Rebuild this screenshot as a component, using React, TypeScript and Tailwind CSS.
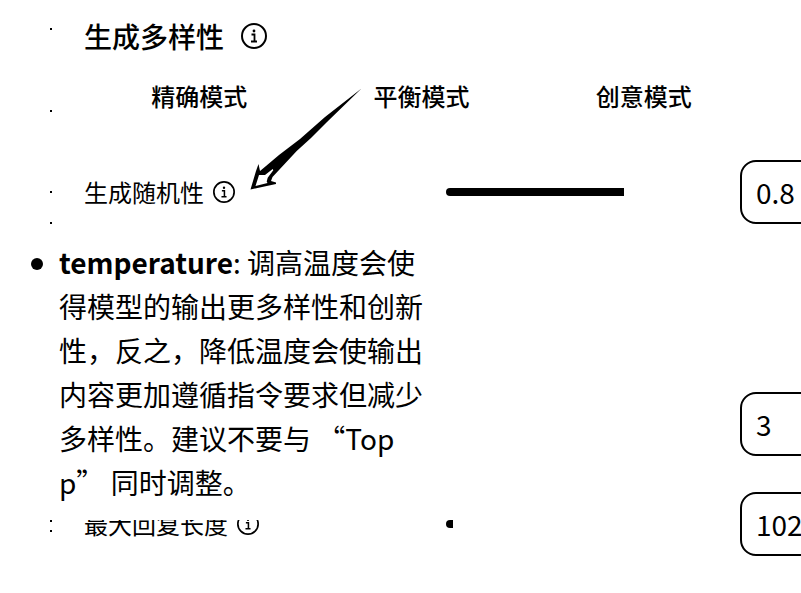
import React from "react";

type Setting = { id: string; label: string; value: string; fill: number; gap: string; dots: string };

const settings: Setting[] = [
  { id: "temperature", label: "生成随机性", value: "0.8", fill: 66, gap: "mt-8", dots: "justify-end gap-[29px]" },
  { id: "rounds", label: "", value: "3", fill: 0, gap: "mt-[168px]", dots: "invisible" },
  { id: "length", label: "最大回复长度", value: "1024", fill: 2.6, gap: "mt-9", dots: "justify-center gap-2 pt-1" },
];

const modes = ["精确模式", "平衡模式", "创意模式"];

function Info({ className }: { className: string }) {
  return (
    <svg viewBox="0 0 26 26" className={className} fill="none" stroke="#000" strokeWidth="2" aria-hidden="true">
      <circle cx="13" cy="13" r="12" />
      <path d="M10.5 11.5H13.5V18.5M10 18.5H16" strokeWidth="1.8" />
      <circle cx="13" cy="8" r="1.4" fill="#000" stroke="none" />
    </svg>
  );
}

function Dot() {
  return <span className="h-0.5 w-0.5 shrink-0 bg-black" />;
}

function Row({ s }: { s: Setting }) {
  return (
    <div className={`flex h-16 items-center pl-[50px] ${s.gap}`}>
      <span className={`mr-8 flex h-full w-0.5 shrink-0 flex-col ${s.dots}`}>
        <Dot />
        <Dot />
      </span>
      <div className="flex w-[362px] shrink-0 items-center gap-[9px] text-2xl leading-8">
        <label htmlFor={s.id}>{s.label}</label>
        {s.label && (
          <button type="button" aria-label="info">
            <Info className="block h-[22px] w-[22px]" />
          </button>
        )}
      </div>
      <input
        id={s.id}
        type="range"
        defaultValue={s.fill}
        aria-label={s.id}
        className="h-2 min-w-0 flex-1 appearance-none rounded-full [&::-webkit-slider-thumb]:appearance-none"
        style={{ background: `linear-gradient(to right, #000 ${s.fill}%, #fff ${s.fill}%)` }}
      />
      <input
        type="text"
        defaultValue={s.value}
        aria-label={`${s.id} value`}
        className="-mr-16 ml-6 h-16 w-[125px] shrink-0 rounded-2xl border-2 border-black bg-white pl-[14px] text-[28px]"
      />
    </div>
  );
}

export default function App() {
  return (
    <main className="relative min-h-screen overflow-hidden bg-white pt-[14px] font-['Noto_Sans_CJK_SC',sans-serif] text-black">
      <header className="flex h-11 items-center pl-[50px]">
        <span className="mr-8 flex h-full items-start pt-[14px]">
          <Dot />
        </span>
        <h1 className="text-[28px] leading-[44px] font-medium">生成多样性</h1>
        <button type="button" aria-label="info" className="ml-[17px]">
          <Info className="block h-[26px] w-[26px]" />
        </button>
      </header>
      <div className="mt-[18px] flex h-10 items-end pl-[50px]">
        <span className="mr-9 flex pb-1">
          <Dot />
        </span>
        <div className="grid flex-1 grid-cols-3 pr-[46px] text-2xl leading-10 font-medium">
          {modes.map((m) => (
            <button type="button" key={m}>{m}</button>
          ))}
        </div>
      </div>
      <section className="pt-3">
        {settings.map((s) => (
          <Row key={s.id} s={s} />
        ))}
      </section>

      <ul className="absolute top-[228px] left-[15px] w-[424px] list-none bg-white pt-3 pr-2 pb-4 pl-11 text-[28px] leading-[44px]">
        <li className="relative">
          <span className="absolute top-[18px] -left-7 h-3 w-3 rounded-full bg-black" />
          <strong className="font-bold">temperature</strong>: 调高温度会使得模型的输出更多样性和创新性，反之，降低温度会使输出内容更加遵循指令要求但减少多样性。建议不要与 “Top p” 同时调整。
        </li>
      </ul>

      <svg viewBox="0 0 112 102" className="absolute top-[88px] left-[250px] h-[102px] w-[112px]" aria-hidden="true">
        <path d="M111.500 .5L75 29L50 51L29 67L16 78L10 83L8.500 76L6 83L.5 101.500L26 96V94.500L21 93L22.500 89L46.700 63L61 50L77 34Z" />
        <path d="M9 87L15 87L22.700 81L23.300 82.300L17.700 89.700L16.700 93.500L17.500 95L5.500 98Z" fill="#fff" />
      </svg>
    </main>
  );
}
